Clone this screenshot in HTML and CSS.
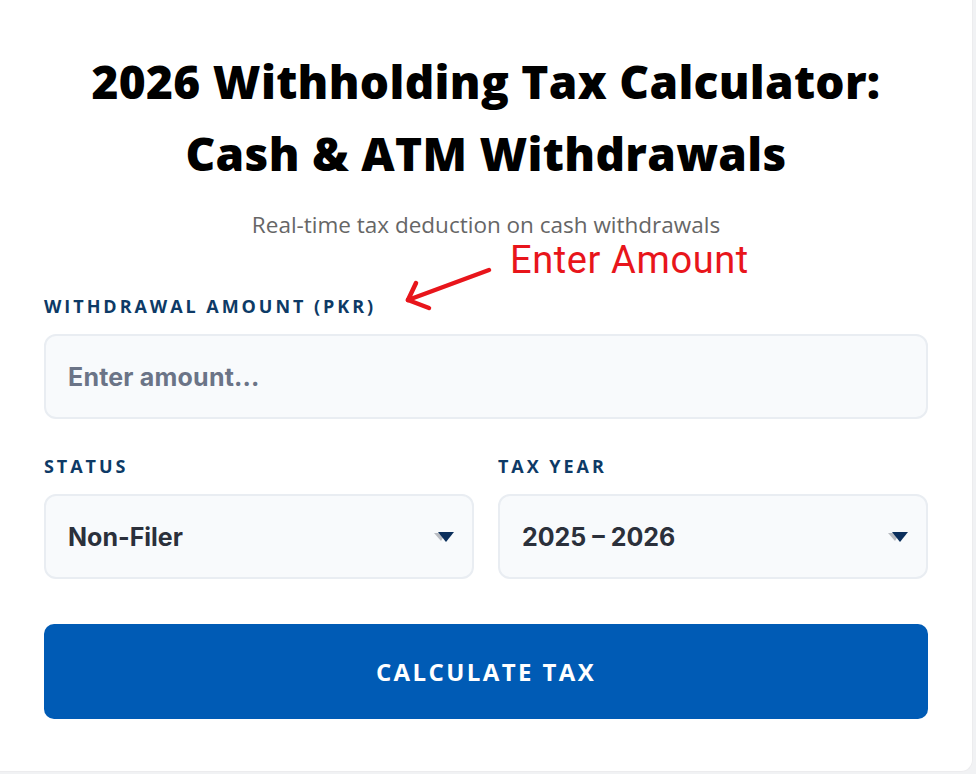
FILE: index.html
```html
<!DOCTYPE html>
<html lang="en">
<head>
<meta charset="utf-8">
<title>2026 Withholding Tax Calculator</title>
<link rel="stylesheet" href="styles.css">
</head>
<body>
<div class="card">
  <h1 class="title">2026 Withholding Tax Calculator:<br>Cash &amp; ATM Withdrawals</h1>
  <p class="subtitle">Real-time tax deduction on cash withdrawals</p>

  <div class="field field-amount">
    <label class="label">Withdrawal Amount (PKR)</label>
    <div class="box"><span class="placeholder">Enter amount...</span></div>
    <div class="annotation">
      <span class="annotation-text">Enter Amount</span>
      <svg class="annotation-arrow" width="100" height="50" viewBox="0 0 100 50">
        <g stroke="#e8151b" stroke-width="4.5" stroke-linecap="round" fill="none">
          <line x1="85" y1="6" x2="4" y2="36"/>
          <line x1="4" y1="36" x2="12" y2="19"/>
          <line x1="4" y1="36" x2="25" y2="44"/>
        </g>
      </svg>
    </div>
  </div>

  <div class="row">
    <div class="field">
      <label class="label">Status</label>
      <div class="box select"><span class="value">Non-Filer</span>
        <svg class="caret" width="20" height="12" viewBox="0 0 20 12"><polygon points="0,2 12,2 7,10" fill="#b9bcc2"/><polygon points="4,1 20,1 12,11" fill="#0b2f5c"/></svg>
      </div>
    </div>
    <div class="field">
      <label class="label">Tax Year</label>
      <div class="box select"><span class="value">2025 – 2026</span>
        <svg class="caret" width="20" height="12" viewBox="0 0 20 12"><polygon points="0,2 12,2 7,10" fill="#b9bcc2"/><polygon points="4,1 20,1 12,11" fill="#0b2f5c"/></svg>
      </div>
    </div>
  </div>

  <button class="btn">Calculate Tax</button>
</div>
</body>
</html>
```
FILE: styles.css
```css
* { box-sizing: border-box; }
html, body { margin: 0; padding: 0; }
body {
  background: #f1f2f4;
  width: 976px;
  height: 774px;
  overflow: hidden;
  font-family: "Open Sans", "Noto Sans", sans-serif;
}
.card {
  width: 973px;
  height: 772px;
  background: #ffffff;
  border-right: 1px solid #ececee;
  border-bottom: 1px solid #ececee;
  border-bottom-right-radius: 12px;
  padding: 45px 44px 0 44px;
  display: flex;
  flex-direction: column;
}
.title {
  margin: 0;
  text-align: center;
  font-family: "Open Sans", sans-serif;
  font-weight: 800;
  font-size: 46px;
  line-height: 72px;
  color: #000;
  letter-spacing: 0.3px;
}
.subtitle {
  margin: 21px 0 0;
  text-align: center;
  font-family: "Open Sans", sans-serif;
  font-size: 22.5px;
  line-height: 30px;
  color: #666;
}
.field { position: relative; display: flex; flex-direction: column; }
.field-amount { margin-top: 54px; }
.label {
  font-family: "Open Sans", sans-serif;
  font-weight: 700;
  font-size: 18px;
  line-height: 24px;
  letter-spacing: 2.95px;
  text-transform: uppercase;
  color: #0d3a66;
}
.box {
  margin-top: 16px;
  height: 85px;
  background: #f8fafc;
  border: 2px solid #e9edf2;
  border-radius: 12px;
  display: flex;
  align-items: center;
  padding: 0 18px 0 22px;
}
.placeholder {
  font-family: Inter, sans-serif;
  font-weight: 700;
  font-size: 25px;
  color: #6b7487;
  letter-spacing: 0.2px;
}
.value {
  font-family: Inter, sans-serif;
  font-weight: 700;
  font-size: 25px;
  color: #2b303b;
  flex: 1;
}
.row {
  margin-top: 35px;
  display: grid;
  grid-template-columns: 1fr 1fr;
  gap: 24px;
}
.btn {
  margin-top: 45px;
  height: 95px;
  border: none;
  border-radius: 10px;
  background: #005bb5;
  color: #fff;
  font-family: "Open Sans", sans-serif;
  font-weight: 700;
  font-size: 24px;
  letter-spacing: 2.4px;
  text-transform: uppercase;
}
.annotation {
  position: absolute;
  left: 360px;
  top: -56px;
}
.annotation-arrow { position: absolute; left: 0; top: 26px; }
.annotation-text {
  position: absolute;
  left: 106px;
  top: 0;
  white-space: nowrap;
  font-family: Roboto, "Liberation Sans", sans-serif;
  font-size: 38px;
  line-height: 44px;
  letter-spacing: 0.6px;
  color: #e8151b;
}
```
